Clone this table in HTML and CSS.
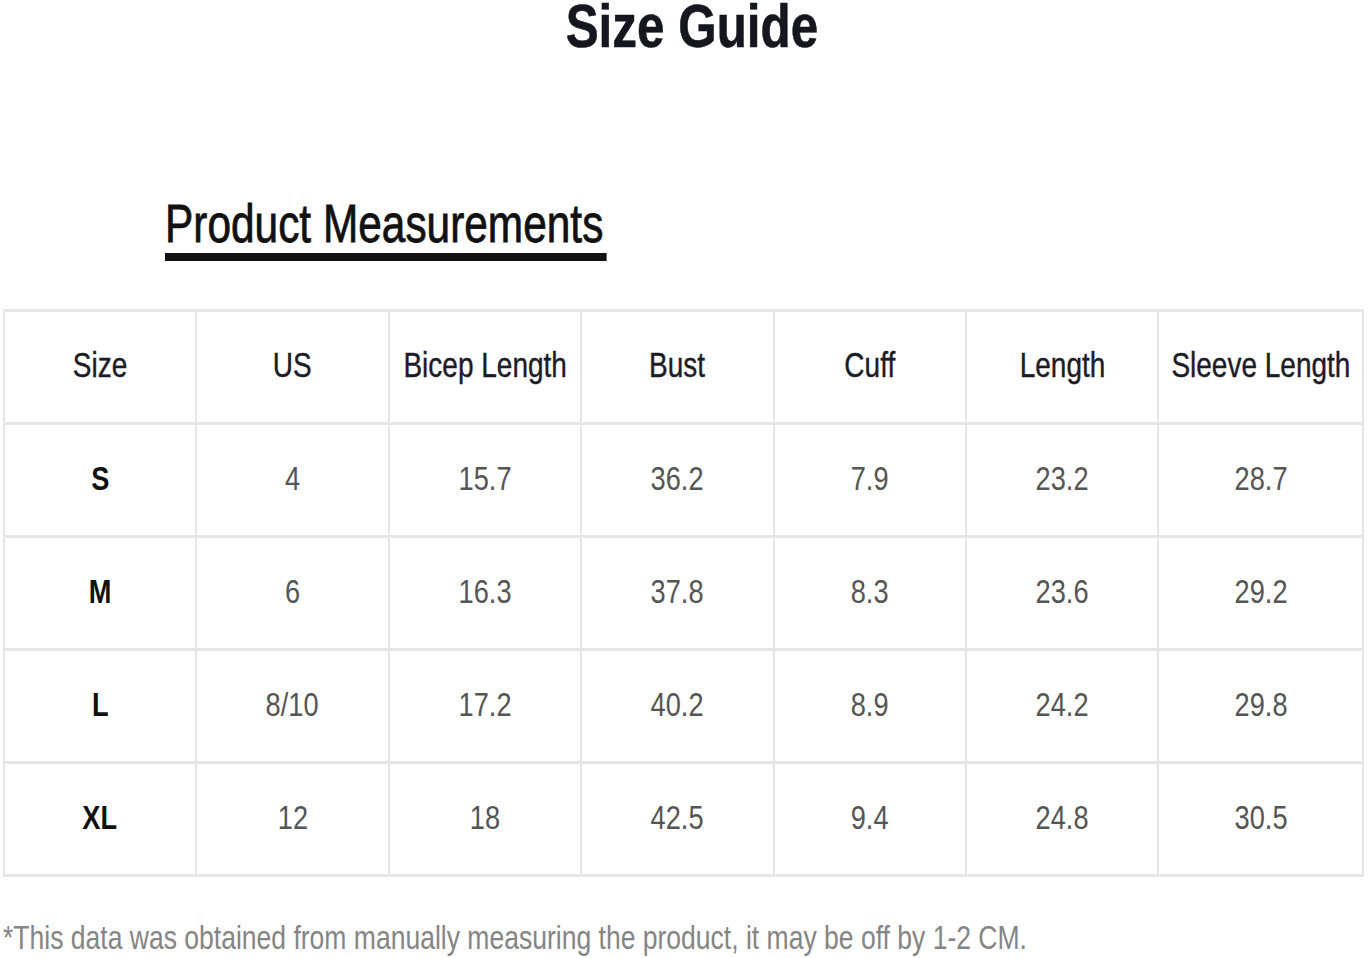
FILE: index.html
```html
<!DOCTYPE html>
<html lang="en">
<head>
<meta charset="utf-8">
<title>Size Guide</title>
<link rel="stylesheet" href="styles.css">
</head>
<body>
<main class="page">
  <h1 class="title"><span class="sq title-text">Size Guide</span></h1>
  <div class="section-head">
    <h2 class="section-title">Product Measurements</h2>
  </div>
  <div class="table">
    <div class="cell head"><span class="sq">Size</span></div>
    <div class="cell head"><span class="sq">US</span></div>
    <div class="cell head"><span class="sq">Bicep Length</span></div>
    <div class="cell head"><span class="sq">Bust</span></div>
    <div class="cell head"><span class="sq">Cuff</span></div>
    <div class="cell head"><span class="sq">Length</span></div>
    <div class="cell head"><span class="sq">Sleeve Length</span></div>

    <div class="cell label"><span class="sq">S</span></div>
    <div class="cell"><span class="sq">4</span></div>
    <div class="cell"><span class="sq">15.7</span></div>
    <div class="cell"><span class="sq">36.2</span></div>
    <div class="cell"><span class="sq">7.9</span></div>
    <div class="cell"><span class="sq">23.2</span></div>
    <div class="cell"><span class="sq">28.7</span></div>

    <div class="cell label"><span class="sq">M</span></div>
    <div class="cell"><span class="sq">6</span></div>
    <div class="cell"><span class="sq">16.3</span></div>
    <div class="cell"><span class="sq">37.8</span></div>
    <div class="cell"><span class="sq">8.3</span></div>
    <div class="cell"><span class="sq">23.6</span></div>
    <div class="cell"><span class="sq">29.2</span></div>

    <div class="cell label"><span class="sq">L</span></div>
    <div class="cell"><span class="sq">8/10</span></div>
    <div class="cell"><span class="sq">17.2</span></div>
    <div class="cell"><span class="sq">40.2</span></div>
    <div class="cell"><span class="sq">8.9</span></div>
    <div class="cell"><span class="sq">24.2</span></div>
    <div class="cell"><span class="sq">29.8</span></div>

    <div class="cell label"><span class="sq">XL</span></div>
    <div class="cell"><span class="sq">12</span></div>
    <div class="cell"><span class="sq">18</span></div>
    <div class="cell"><span class="sq">42.5</span></div>
    <div class="cell"><span class="sq">9.4</span></div>
    <div class="cell"><span class="sq">24.8</span></div>
    <div class="cell"><span class="sq">30.5</span></div>
  </div>
  <p class="note"><span class="note-text">*This data was obtained from manually measuring the product, it may be off by 1-2 CM.</span></p>
</main>
</body>
</html>
```
FILE: styles.css
```css
html, body {
  margin: 0;
  padding: 0;
  background: #ffffff;
}

body {
  font-family: "Liberation Sans", Arial, sans-serif;
  color: #222;
  width: 1368px;
  height: 958px;
  overflow: hidden;
}

.page {
  display: flex;
  flex-direction: column;
}

.sq {
  display: inline-block;
  transform: scaleX(0.8);
  transform-origin: center;
  white-space: nowrap;
}

.title {
  margin: 0;
  padding-left: 15px;
  text-align: center;
  font-size: 61px;
  line-height: 53px;
  height: 57px;
  font-weight: 700;
  color: #16161e;
  -webkit-text-stroke: 0.6px #16161e;
}

.title-text {
  transform: scaleX(0.81);
}

.section-head {
  margin-top: 140px;
  padding-left: 165px;
}

.section-title {
  display: inline-block;
  margin: 0;
  padding: 0 4px 3px 0;
  font-size: 53px;
  line-height: 53px;
  font-weight: 400;
  color: #111;
  -webkit-text-stroke: 0.8px #111;
  border-bottom: 8px solid #111;
  transform: scaleX(0.8);
  transform-origin: left center;
  white-space: nowrap;
}

.table {
  margin: 48px 0 0 3px;
  width: 1361px;
  display: grid;
  grid-template-columns: repeat(6, 190.4px) minmax(0, 1fr);
  grid-auto-rows: 110px;
  gap: 3px 2px;
  padding: 3px 2px;
  box-sizing: border-box;
  background: #e6e6e6;
}

.cell {
  min-width: 0;
  background: #fff;
  display: flex;
  align-items: center;
  justify-content: center;
  padding-bottom: 5px;
  font-size: 34px;
  line-height: 34px;
  color: #555;
}

.cell.head {
  font-size: 35px;
  line-height: 35px;
  color: #1c1c26;
  -webkit-text-stroke: 0.4px #1c1c26;
}

.cell.label {
  color: #111;
  font-weight: 700;
}

.note {
  margin: 43px 0 0 3px;
  font-size: 34px;
  line-height: 34px;
  color: #858585;
}

.note-text {
  display: inline-block;
  white-space: nowrap;
  transform: scaleX(0.78);
  transform-origin: left center;
}
```
